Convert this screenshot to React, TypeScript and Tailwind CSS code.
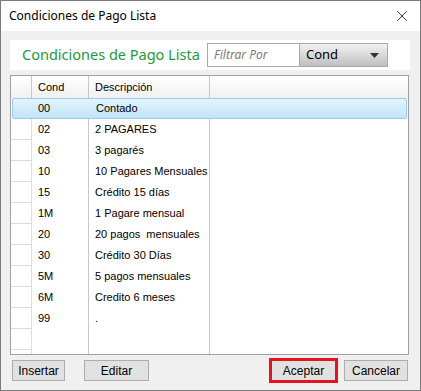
import { X } from "lucide-react";

const rows = [
  { cond: "00", desc: "Contado" },
  { cond: "02", desc: "2 PAGARES" },
  { cond: "03", desc: "3 pagarés" },
  { cond: "10", desc: "10 Pagares Mensuales" },
  { cond: "15", desc: "Crédito 15 días" },
  { cond: "1M", desc: "1 Pagare mensual" },
  { cond: "20", desc: "20 pagos  mensuales" },
  { cond: "30", desc: "Crédito 30 Días" },
  { cond: "5M", desc: "5 pagos mensuales" },
  { cond: "6M", desc: "Credito 6 meses" },
  { cond: "99", desc: "." },
];

const App = () => {
  return (
    <div className="w-[421px] h-[391px] flex flex-col border border-[#7a7a7a] bg-[#f0f0f0] font-['Liberation_Sans',Arial,sans-serif] text-[11px] text-black">
      {/* title bar */}
      <div className="h-[30px] bg-white flex items-center justify-between pl-[8px] pr-[9px] shrink-0">
        <span className="text-[12px] font-['Noto_Sans',sans-serif]">
          Condiciones de Pago Lista
        </span>
        <X size={18} strokeWidth={1.2} className="text-[#222]" />
      </div>

      <div className="flex flex-col px-[9px] pt-[9px]">
        {/* header panel */}
        <div className="h-[30px] w-[400px] bg-white flex items-center pl-[12px]">
          <span className="text-[14.5px] text-[#1e9a3c] font-['Noto_Sans',sans-serif] w-[185px] whitespace-nowrap">
            Condiciones de Pago Lista
          </span>
          <div className="h-[24px] w-[92px] border border-[#a9a9a9] border-r-0 flex items-center pl-[6px] text-[12px] italic text-[#7a7a7a] font-['Noto_Sans',sans-serif]">
            Filtrar Por
          </div>
          <div className="h-[24px] w-[89px] border border-[#a9a9a9] bg-gradient-to-b from-[#f2f2f2] via-[#d9d9d9] to-[#bfbfbf] flex items-center justify-between pl-[6px] pr-[8px] text-[13px] font-['Noto_Sans',sans-serif]">
            <span>Cond</span>
            <svg width="9" height="5" viewBox="0 0 9 5">
              <path d="M0 0h9L4.5 5z" fill="#333" />
            </svg>
          </div>
        </div>

        {/* grid */}
        <div className="mt-[5px] w-[399px] h-[280px] border border-[#a0a0a0] bg-white flex flex-col overflow-hidden">
          <div className="h-[22px] flex bg-gradient-to-b from-[#ffffff] to-[#f0f0f0] shrink-0">
            <div className="w-[21px] border-r border-[#c8c8c8]" />
            <div className="w-[57px] border-r border-[#c8c8c8] flex items-center pl-[6px]">Cond</div>
            <div className="w-[121px] border-r border-[#c8c8c8] flex items-center pl-[6px]">Descripción</div>
            <div className="flex-1" />
          </div>
          {rows.map((r, i) =>
            i === 0 ? (
              <div
                key={r.cond}
                className="h-[21px] mx-[1px] flex items-center rounded-[2px] border border-[#99cde9] bg-gradient-to-b from-[#e3f3fd] to-[#c2e4f8]"
              >
                <div className="w-[20px]" />
                <div className="w-[57px] pl-[5px]">{r.cond}</div>
                <div className="w-[121px] pl-[6px]">{r.desc}</div>
              </div>
            ) : (
              <div key={r.cond} className="h-[21px] flex">
                <div className="w-[21px] border-r border-b border-[#dcdcdc]" />
                <div className="w-[57px] border-r border-[#c8c8c8] flex items-center pl-[6px]">{r.cond}</div>
                <div className="w-[121px] border-r border-[#c8c8c8] flex items-center pl-[6px] whitespace-pre">{r.desc}</div>
                <div className="flex-1" />
              </div>
            )
          )}
          <div className="flex-1 flex">
            <div className="w-[21px] border-r border-[#dcdcdc] flex flex-col">
              <div className="h-[21px] border-b border-[#dcdcdc] shrink-0" />
            </div>
            <div className="w-[57px] border-r border-[#c8c8c8]" />
            <div className="w-[121px] border-r border-[#c8c8c8]" />
          </div>
        </div>

        {/* buttons */}
        <div className="mt-[3px] flex items-center h-[25px] text-[12px]">
          <button className="ml-[2px] h-[21px] w-[53px] border border-[#adadad] bg-[#e1e1e1]">Insertar</button>
          <button className="ml-[19px] h-[21px] w-[65px] border border-[#adadad] bg-[#e1e1e1]">Editar</button>
          <div className="ml-[120px] h-[25px] w-[69px] border-[3px] border-[#e3141f] flex items-center justify-center">
            <button className="h-[19px] w-[63px] bg-[#e1e1e1]">Aceptar</button>
          </div>
          <button className="ml-[6px] h-[21px] w-[64px] border border-[#adadad] bg-[#e1e1e1]">Cancelar</button>
        </div>
      </div>
    </div>
  );
};

export default App;
